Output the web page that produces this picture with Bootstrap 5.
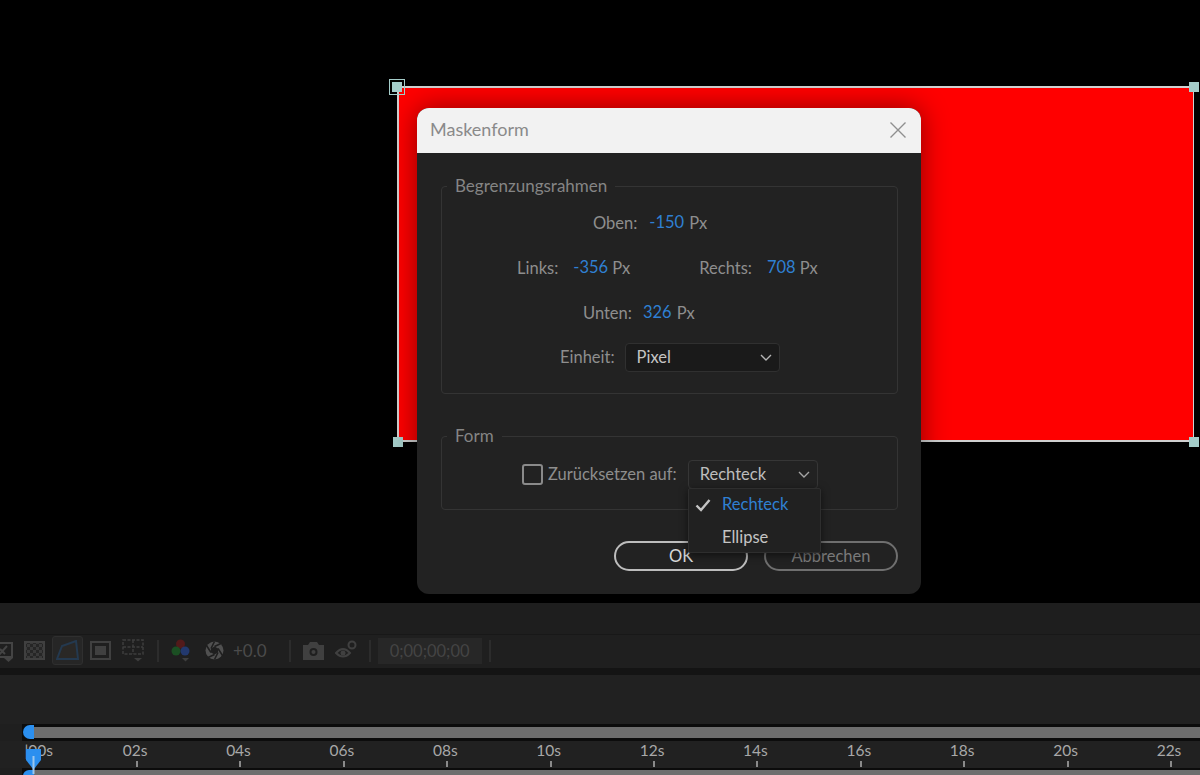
<!DOCTYPE html>
<html lang="de">
<head>
<meta charset="utf-8">
<title>Maskenform</title>
<link href="https://cdn.jsdelivr.net/npm/bootstrap@5.3.0/dist/css/bootstrap.min.css" rel="stylesheet">
<style>
html,body{height:100%;overflow:hidden;background:#000;}
body{font-family:Lato,"Noto Sans",sans-serif;font-size:16.5px;color:#8e8e8e;}
.stage{position:relative;height:603px;background:#000;}
.redlayer{position:absolute;left:397px;top:86px;width:797px;height:356px;background:#f00;border:2px solid #d0d0d0;border-right-width:1px;}
.hnd{position:absolute;width:10px;height:10px;background:#a5cdca;}
.hnd-a{left:392px;top:82px;outline:1px solid #a5cdca;outline-offset:2px;}
.hnd-b{left:1189px;top:82px;}
.hnd-c{left:393px;top:437px;}
.hnd-d{left:1189px;top:437px;}
.dlg{position:absolute;left:417px;top:108px;width:504px;height:486px;background:#222;border-radius:12px;box-shadow:0 0 28px rgba(0,0,0,.45);}
.dlg-head{height:45px;background:#f2f2f2;border-radius:12px 12px 0 0;padding:0 14px 2px 13px;color:#8a8a8a;font-size:18px;}
.dlg-body{padding:23px 23px 0 24px;}
.grp{border:1px solid #343434;border-radius:4px;padding:0;margin:0;min-width:0;}
.grp legend{float:none;width:auto;margin:0 0 0 5px;padding:0 8px;font-size:17px;line-height:20px;color:#858585;}
.grp-one{height:218px;}
.grp-two{height:84px;margin-top:32px;position:relative;}
.frow{height:45px;}
.r1{margin-left:151px;margin-top:5px;}
.r2{margin-left:75px;}
.r3{margin-left:141px;}
.r4{margin-left:118px;margin-top:-1px;}
.val{color:#2f80d3;margin-left:12px;margin-right:5px;position:relative;top:-1px;}
.r2 .val{margin-left:15px;margin-right:4px;}
.r3 .val{margin-left:11px;}
.val-sp{margin-left:69px;}
.fsel{background:#1a1a1a;border:1px solid #303030;border-radius:4px;height:29px;width:155px;margin-left:10px;padding:0 7px 0 11px;color:#c4c4c4;}
.fsel-b{background:#222;border-color:#363636;width:130px;margin-left:11px;color:#bdbdbd;}
.reset{margin-left:80px;margin-top:14px;height:29px;}
.cbx{width:21px;height:21px;border:2px solid #8a8a8a;border-radius:3px;margin-right:5px;}
.menu-over{position:absolute;left:246px;top:42px;width:133px;height:65px;background:#212121;border:1px solid #2e2e2e;border-radius:2px;box-shadow:0 2px 8px rgba(0,0,0,.55);z-index:3;padding:0;margin:0;list-style:none;}
.menu-over li{height:33px;padding-left:33px;line-height:31px;color:#c4c4c4;position:relative;}
.menu-over li.sel{color:#2f80d3;}
.menu-over svg{position:absolute;left:6px;top:9px;}
.acts{margin-top:31px;gap:16px;}
.pill{width:134px;height:30px;border-radius:15px;background:transparent;border:2px solid #bdbdbd;color:#d8d8d8;font-size:16.5px;line-height:25px;padding:0;}
.pill-off{border-color:#6f6f6f;color:#7a7a7a;}
.panel{height:172px;background:#1f1f1f;display:flex;flex-direction:column;position:relative;overflow:hidden;}
.p-top{height:32px;background:#1e1e1e;border-bottom:1px solid #181818;flex:none;}
.tools{height:31px;background:#1f1f1f;flex:none;padding-left:0;margin-bottom:2px;}
.p-gap{height:7px;background:#141414;flex:none;}
.p-blank{height:49px;background:#212121;flex:none;}
.wa{height:17px;background:#0c0c0c;flex:none;padding:3px 0 3px 11px;margin-left:22px;}
.wa-in{height:11px;background:#6e6e6e;}
.ruler{height:27px;background:#212121;flex:none;margin-left:-19px;width:1400px;}
.rcell{flex:0 0 103.4px;text-align:center;color:#a8a8a8;font-size:15.5px;line-height:19px;position:relative;padding-right:2px;}
.rcell::after{content:"";position:absolute;left:50%;bottom:1px;width:2px;height:6px;background:#8a8a8a;}
.rcell.rfirst{padding:0 0 0 12px;}
.wb{height:7px;background:#0c0c0c;flex:none;padding:2px 0 0 11px;margin-left:22px;}
.wb-in{height:10px;background:#6e6e6e;}
.sep{width:2px;height:22px;background:#2c2c2c;flex:none;}
.ico{display:block;flex:none;}
.tbox{width:104px;height:26px;background:#272727;color:#444;font-size:16.5px;text-align:center;line-height:26px;flex:none;}
.dim{color:#4b4b4b;font-size:17px;}
.selbox{width:31px;height:29px;border:1px solid #2f2f2f;background:#262626;border-radius:3px;flex:none;}
.m1{margin-left:10px}.m2{margin-left:7px}.m3{margin-left:7px}.m4{margin-left:12px}.m5{margin-left:13px}.m6{margin-left:11px}.m7{margin-left:14px}.m8{margin-left:9px}.m9{margin-left:22px}
.ph-cap{position:absolute;left:23px;top:122px;width:11px;height:14px;background:#2b8fef;border-radius:7px 0 0 7px;}
.ph-cap2{position:absolute;left:23px;top:167px;width:11px;height:8px;background:#2b8fef;border-radius:6px 0 0 0;}
.ph-head{position:absolute;left:25px;top:145px;}
</style>
</head>
<body>
<div class="stage">
  <div class="redlayer"></div>
  <span class="hnd hnd-a"></span><span class="hnd hnd-b"></span><span class="hnd hnd-c"></span><span class="hnd hnd-d"></span>
  <div class="dlg d-flex flex-column">
    <div class="dlg-head d-flex align-items-center justify-content-between">
      <span>Maskenform</span>
      <svg class="ico" width="18" height="18" viewBox="0 0 18 18"><path d="M1.500 1.500l15 15M16.500 1.500l-15 15" stroke="#8f8f8f" stroke-width="1.400" fill="none"/></svg>
    </div>
    <div class="dlg-body">
      <fieldset class="grp grp-one">
        <legend>Begrenzungsrahmen</legend>
        <div class="frow r1 d-flex align-items-center"><span>Oben:</span><span class="val">-150</span><span>Px</span></div>
        <div class="frow r2 d-flex align-items-center"><span>Links:</span><span class="val">-356</span><span>Px</span><span class="val-sp">Rechts:</span><span class="val">708</span><span>Px</span></div>
        <div class="frow r3 d-flex align-items-center"><span>Unten:</span><span class="val">326</span><span>Px</span></div>
        <div class="frow r4 d-flex align-items-center"><span>Einheit:</span>
          <div class="fsel d-flex align-items-center justify-content-between"><span>Pixel</span>
            <svg class="ico" width="12" height="7" viewBox="0 0 12 7"><path d="M1 1l5 5 5-5" stroke="#b5b5b5" stroke-width="1.400" fill="none"/></svg></div>
        </div>
      </fieldset>
      <fieldset class="grp grp-two">
        <legend>Form</legend>
        <div class="reset d-flex align-items-center">
          <span class="cbx"></span><span>Zurücksetzen auf:</span>
          <div class="fsel fsel-b d-flex align-items-center justify-content-between"><span>Rechteck</span>
            <svg class="ico" width="12" height="7" viewBox="0 0 12 7"><path d="M1 1l5 5 5-5" stroke="#a5a5a5" stroke-width="1.400" fill="none"/></svg></div>
        </div>
        <ul class="menu-over">
          <li class="sel"><svg width="16" height="14" viewBox="0 0 16 14"><path d="M1.500 7.500l4.500 4.500L14.500 2" stroke="#c4c4c4" stroke-width="2.400" fill="none"/></svg>Rechteck</li>
          <li>Ellipse</li>
        </ul>
      </fieldset>
      <div class="acts d-flex justify-content-end">
        <button type="button" class="btn pill">OK</button>
        <button type="button" class="btn pill pill-off">Abbrechen</button>
      </div>
    </div>
  </div>
</div>
<div class="panel">
  <div class="p-top"></div>
  <div class="tools d-flex align-items-center">
    <svg class="ico" width="14" height="24" viewBox="0 0 14 24"><path d="M-4 4H12V18H-4" stroke="#444" stroke-width="2" fill="none"/><path d="M-2 17L7 7M0 10L5 15" stroke="#444" stroke-width="2"/><path d="M4 19h9l-4.500 4z" fill="#444"/></svg>
    <svg class="ico m1" width="21" height="19" viewBox="0 0 21 19"><defs><pattern id="chk" width="6" height="6" patternUnits="userSpaceOnUse"><rect width="6" height="6" fill="#262626"/><rect width="3" height="3" fill="#3a3a3a"/><rect x="3" y="3" width="3" height="3" fill="#3a3a3a"/></pattern></defs><rect x="1" y="1" width="19" height="17" fill="url(#chk)" stroke="#404040" stroke-width="2"/></svg>
    <div class="selbox m2 d-flex align-items-center justify-content-center">
      <svg class="ico" width="23" height="21" viewBox="0 0 23 21"><path d="M1 19L6 6 20 1 22 19z" fill="#2a2826" stroke="#24394f" stroke-width="2"/></svg>
    </div>
    <svg class="ico m3" width="21" height="19" viewBox="0 0 21 19"><rect x="1" y="1" width="19" height="17" fill="none" stroke="#404040" stroke-width="2"/><rect x="5" y="5" width="11" height="9" fill="#404040"/></svg>
    <svg class="ico m6" width="22" height="23" viewBox="0 0 22 23"><path d="M1 1h20v14H1zM11 1v14M1 8h20" fill="none" stroke="#3e3e3e" stroke-width="1.500" stroke-dasharray="3 1.500"/><path d="M12 19h8l-4 3.500z" fill="#3e3e3e"/></svg>
    <span class="sep m5"></span>
    <svg class="ico m4" width="20" height="23" viewBox="0 0 20 23"><circle cx="9.500" cy="5" r="4.500" fill="#521a1a"/><circle cx="5" cy="12" r="4.500" fill="#1b4f23"/><circle cx="14" cy="12" r="4.500" fill="#22386d"/><path d="M11 19h7l-3.500 3.500z" fill="#3e3e3e"/></svg>
    <svg class="ico m7" width="19" height="19" viewBox="0 0 19 19"><circle cx="9.500" cy="9.500" r="9" fill="#505050"/><path d="M9.500 5.500L17 2M13 7.500L17.500 14.500M13 11.500L9.500 18.500M9.500 13.500L2 17M6 11.500L1.500 4.500M6 7.500L9.500 .5" stroke="#1f1f1f" stroke-width="1.600" fill="none"/><path d="M9.500 5.500L13 7.500V11.500L9.500 13.500 6 11.500V7.500z" fill="#1f1f1f"/></svg>
    <span class="dim m8">+0.0</span>
    <span class="sep m9"></span>
    <svg class="ico m4" width="21" height="18" viewBox="0 0 21 18"><path d="M0 3h5l2-3h7l2 3h5v15H0z" fill="#404040"/><circle cx="10.500" cy="10" r="4" fill="#1f1f1f"/><circle cx="10.500" cy="10" r="2" fill="#404040"/></svg>
    <svg class="ico m6" width="23" height="21" viewBox="0 0 23 21"><path d="M1 13Q8 5 15 13 8 20 1 13z" fill="none" stroke="#404040" stroke-width="2"/><circle cx="8" cy="13" r="2.500" fill="#404040"/><circle cx="17" cy="5" r="3.500" fill="none" stroke="#404040" stroke-width="2"/></svg>
    <span class="sep m6"></span>
    <div class="tbox m3">0;00;00;00</div>
    <span class="sep m3"></span>
  </div>
  <div class="p-gap"></div>
  <div class="p-blank"></div>
  <div class="wa"><div class="wa-in"></div></div>
  <div class="ruler d-flex">
    <span class="rcell rfirst">|00s</span><span class="rcell">02s</span><span class="rcell">04s</span><span class="rcell">06s</span><span class="rcell">08s</span><span class="rcell">10s</span><span class="rcell">12s</span><span class="rcell">14s</span><span class="rcell">16s</span><span class="rcell">18s</span><span class="rcell">20s</span><span class="rcell">22s</span>
  </div>
  <div class="wb"><div class="wb-in"></div></div>
  <span class="ph-cap"></span><span class="ph-cap2"></span>
  <svg class="ph-head" width="17" height="26" viewBox="0 0 17 26"><path d="M1 1h15v11l-7 9H8L1 12z" fill="#2b8fef"/><rect x="7.500" y="8" width="2" height="18" fill="#9cc7ee"/></svg>
</div>
<script src="https://cdn.jsdelivr.net/npm/bootstrap@5.3.0/dist/js/bootstrap.bundle.min.js"></script>
</body>
</html>
